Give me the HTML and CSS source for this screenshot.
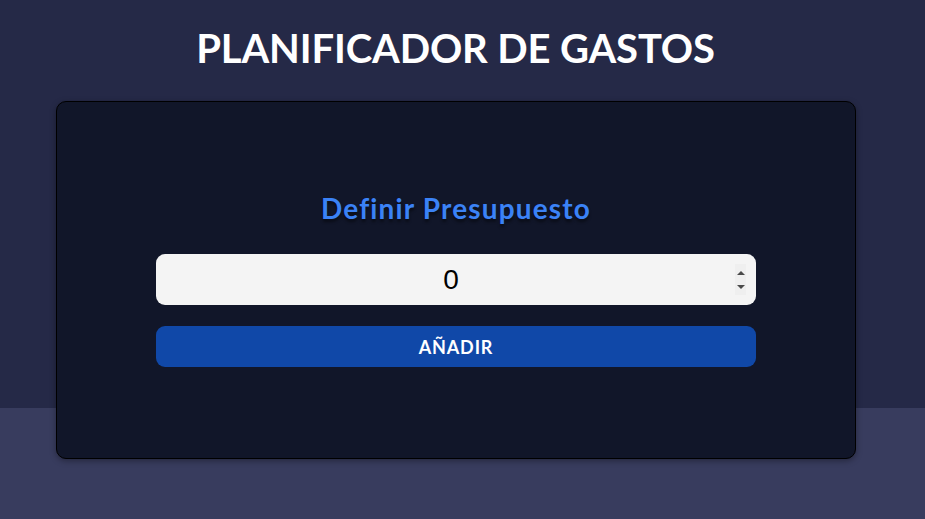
FILE: index.html
```html
<!DOCTYPE html>
<html lang="es">
<head>
<meta charset="utf-8">
<title>Planificador de gastos</title>
<link rel="stylesheet" href="styles.css">
</head>
<body>
<header class="header">
  <h1 class="title">PLANIFICADOR DE GASTOS</h1>
</header>
<main class="main">
  <section class="card">
    <form class="form">
      <label class="label" for="budget">Definir Presupuesto</label>
      <div class="field-wrap">
        <input class="field" id="budget" type="number" value="0">
        <span class="spinner" aria-hidden="true">
          <svg width="11" height="31" viewBox="0 0 11 31">
            <path d="M2 11 L6 7 L10 11 Z" fill="#4a4a4a"/>
            <path d="M2 21 L10 21 L6 25 Z" fill="#4a4a4a"/>
          </svg>
        </span>
      </div>
      <button class="submit" type="button">AÑADIR</button>
    </form>
  </section>
</main>
</body>
</html>
```
FILE: styles.css
```css
* { box-sizing: border-box; }
html, body { margin: 0; padding: 0; }
body {
  background: #383c5e;
  font-family: Lato, "Noto Sans", sans-serif;
  min-height: 519px;
}
.header {
  background: #252947;
  height: 408px;
  padding: 23px 14px 0 0;
}
.title {
  margin: 0;
  text-align: center;
  color: #ffffff;
  font-size: 40px;
  font-weight: 700;
  line-height: 50px;
  letter-spacing: -0.15px;
}
.main {
  padding-right: 13px;
  margin-top: -307px;
}
.card {
  width: 800px;
  margin: 0 auto;
  background: #111629;
  border: 1px solid #000000;
  border-radius: 10px;
  box-shadow: 0 2px 6px rgba(0,0,0,0.35);
  padding: 89px 99px 91px;
  position: relative;
}
.form {
  display: flex;
  flex-direction: column;
  align-items: stretch;
}
.label {
  text-align: center;
  color: #3b82f6;
  font-size: 28px;
  font-weight: 700;
  line-height: 34px;
  letter-spacing: 1.15px;
  font-variant-ligatures: none;
  text-shadow: 0 3px 3px rgba(0,0,0,0.45);
  margin-bottom: 29px;
}
.field-wrap {
  position: relative;
}
.field {
  display: block;
  width: 100%;
  height: 51px;
  border: none;
  border-radius: 9px;
  background: #f4f4f4;
  text-align: center;
  font-family: "Liberation Sans", Arial, sans-serif;
  font-size: 28px;
  color: #000;
  padding: 0 22px 0 12px;
  outline: none;
  -moz-appearance: textfield;
}
.field::-webkit-inner-spin-button,
.field::-webkit-outer-spin-button {
  -webkit-appearance: none;
  margin: 0;
}
.spinner {
  position: absolute;
  right: 10px;
  top: 10px;
  width: 11px;
  height: 31px;
  background: #efefef;
  display: flex;
}
.submit {
  margin-top: 21px;
  height: 41px;
  border: none;
  border-radius: 9px;
  background: #1048a8;
  color: #ffffff;
  font-family: Lato, "Noto Sans", sans-serif;
  font-size: 18px;
  font-weight: 700;
  letter-spacing: 0.85px;
  cursor: pointer;
}
```
